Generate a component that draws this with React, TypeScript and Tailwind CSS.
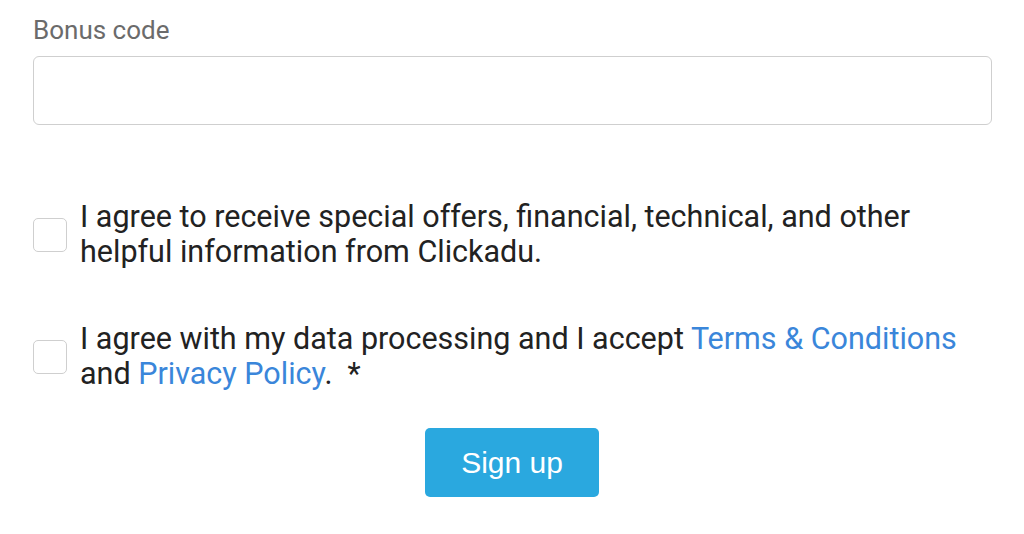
import React from 'react';

export default function App() {
  return (
    <div className="w-[1024px] h-[534px] bg-white font-['Roboto',sans-serif] overflow-hidden">
      <div className="pl-[33px] pr-[32px] pt-[15px]">
        {/* Bonus code field */}
        <label className="block text-[26px] leading-[30px] text-[#6b6b6b]">Bonus code</label>
        <input
          type="text"
          className="mt-[11px] block w-full h-[69px] rounded-[6px] border border-[#cfcfcf] bg-white px-4 text-[22px] outline-none"
        />

        {/* Agreements */}
        <div className="mt-[74px] flex items-start gap-[13px]">
          <span className="mt-[19px] shrink-0 w-[34px] h-[34px] rounded-[5px] border border-[#cfcfcf] bg-white" />
          <p className="text-[30.5px] leading-[35px] text-[#222] whitespace-nowrap">
            I agree to receive special offers, financial, technical, and other
            <br />
            helpful information from Clickadu.
          </p>
        </div>

        <div className="mt-[52px] flex items-start gap-[13px]">
          <span className="mt-[19px] shrink-0 w-[34px] h-[34px] rounded-[5px] border border-[#cfcfcf] bg-white" />
          <p className="text-[30.5px] leading-[35px] text-[#222] whitespace-nowrap">
            I agree with my data processing and I accept{' '}
            <a className="text-[#3a86da]">Terms &amp; Conditions</a>
            <br />
            and <a className="text-[#3a86da]">Privacy Policy</a>.&nbsp; *
          </p>
        </div>

        <div className="mt-[37px] flex justify-center pr-[1px]">
          <button className="w-[174px] h-[69px] rounded-[5px] bg-[#2aa8df] text-white text-[30px] font-['Liberation_Sans',sans-serif]">
            Sign up
          </button>
        </div>
      </div>
    </div>
  );
}
